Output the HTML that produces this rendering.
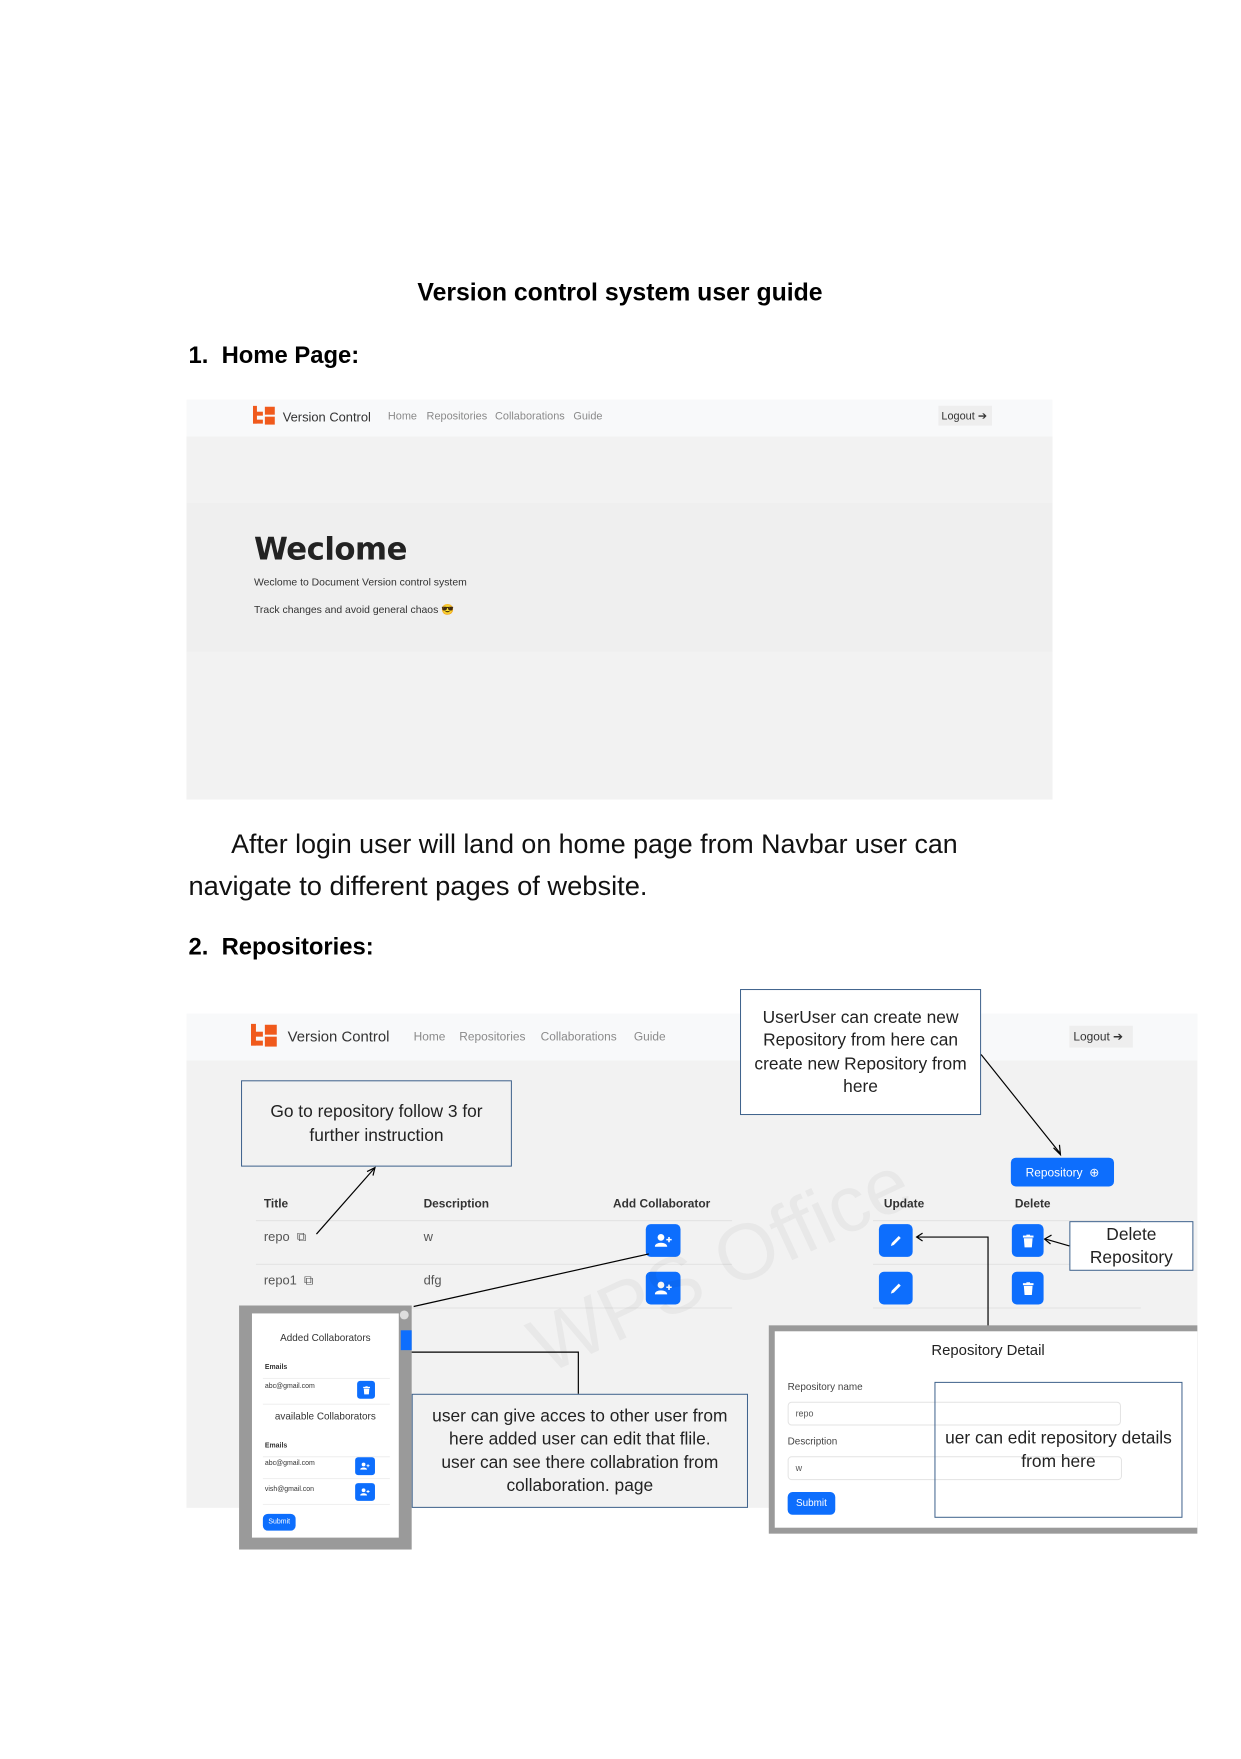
<!DOCTYPE html>
<html><head><meta charset="utf-8"><style>
*{margin:0;padding:0;box-sizing:border-box}
body{width:1241px;height:1754px;background:#fff;position:relative;overflow:hidden;font-family:"Liberation Sans",sans-serif;color:#000}
#w{position:absolute;left:0;top:3px;width:1260px;height:1770px;transform:scale(0.992);transform-origin:0 0}
.a{position:absolute;white-space:nowrap}
.h{font-weight:bold;font-size:24px}
.nav{color:#8a8a8a;font-size:11px}
.btn{position:absolute;background:#0d6efd;border-radius:5px;display:flex;align-items:center;justify-content:center}
.box{position:absolute;border:1px solid #3b5f8a;background:#f2f2f2;text-align:center;font-size:17.5px;color:#222;line-height:23.5px;display:flex;align-items:center;justify-content:center;flex-direction:column}
.m{position:absolute;font-size:7px;color:#333;white-space:nowrap}
</style></head><body><div id="w">
<svg width="0" height="0" style="position:absolute"><defs>
<symbol id="pu" viewBox="0 0 20 16"><circle cx="7" cy="4.5" r="3.8" fill="#fff"/><path d="M0 15 C0 9 14 9 14 15 Z" fill="#fff"/><path d="M16 4v6M13 7h6" stroke="#fff" stroke-width="1.8"/></symbol>
<symbol id="tr" viewBox="0 0 12 14"><rect x="0" y="1" width="12" height="2.2" fill="#fff"/><rect x="4" y="0" width="4" height="2" fill="#fff"/><path d="M1.2 4h9.6l-0.8 10h-8z" fill="#fff"/></symbol>
<symbol id="pe" viewBox="0 0 14 14"><path d="M2 12 L3 9 L10 2 L12 4 L5 11 Z" fill="#fff"/></symbol>
</defs></svg>
<div class="a h" style="left:0;width:1250px;text-align:center;top:278px;font-size:25px">Version control system user guide</div>
<div class="a h" style="left:190px;top:342px">1.&nbsp; Home Page:</div>

<div class="a" style="left:188px;top:400px;width:873px;height:403px;background:#f2f2f2"></div>
<div class="a" style="left:188px;top:400px;width:873px;height:37px;background:#f8f9fa"></div>
<div class="a" style="left:188px;top:504px;width:873px;height:150px;background:#efefef"></div>
<svg class="a" style="left:255px;top:406px" width="24" height="20"><rect x="0" y="0" width="4" height="18" fill="#f05a1c"/><rect x="0" y="14" width="10" height="4" fill="#f05a1c"/><rect x="0" y="6" width="10" height="4" fill="#f05a1c"/><rect x="12" y="1" width="10" height="8" fill="#f05a1c"/><rect x="12" y="11" width="10" height="8" fill="#f05a1c"/></svg>
<div class="a" style="left:285px;top:410px;font-size:13px;color:#333">Version Control</div>
<div class="a nav" style="left:391px;top:411px">Home</div>
<div class="a nav" style="left:430px;top:411px">Repositories</div>
<div class="a nav" style="left:499px;top:411px">Collaborations</div>
<div class="a nav" style="left:578px;top:411px">Guide</div>
<div class="a" style="left:946px;top:406px;width:54px;height:20px;background:#eee;font-size:11px;color:#333;padding:4px 3px">Logout ➔</div>
<div class="a" style="left:256px;top:533px;font-size:31px;font-weight:bold;color:#222;font-family:'DejaVu Sans',sans-serif;letter-spacing:-0.5px">Weclome</div>
<div class="a" style="left:256px;top:578px;font-size:10.5px;color:#333">Weclome to Document Version control system</div>
<div class="a" style="left:256px;top:605px;font-size:10.5px;color:#333">Track changes and avoid general chaos 😎</div>

<div class="a" style="left:233px;top:833px;font-size:27px;color:#111">After login user will land on home page from Navbar user can</div>
<div class="a" style="left:190px;top:874px;font-size:27.5px;color:#111">navigate to different pages of website.</div>
<div class="a h" style="left:190px;top:938px">2.&nbsp; Repositories:</div>

<div class="a" style="left:188px;top:1019px;width:1019px;height:498px;background:#f2f2f2"></div>
<div class="a" style="left:188px;top:1019px;width:1019px;height:47px;background:#f8f9fa"></div>
<svg class="a" style="left:253px;top:1029px" width="28" height="24"><rect x="0" y="0" width="5" height="22" fill="#f05a1c"/><rect x="0" y="17" width="12" height="5" fill="#f05a1c"/><rect x="0" y="8" width="12" height="5" fill="#f05a1c"/><rect x="14" y="1" width="12" height="10" fill="#f05a1c"/><rect x="14" y="13" width="12" height="10" fill="#f05a1c"/></svg>
<div class="a" style="left:290px;top:1034px;font-size:15px;color:#333">Version Control</div>
<div class="a nav" style="left:417px;top:1035px;font-size:12px">Home</div>
<div class="a nav" style="left:463px;top:1035px;font-size:12px">Repositories</div>
<div class="a nav" style="left:545px;top:1035px;font-size:12px">Collaborations</div>
<div class="a nav" style="left:639px;top:1035px;font-size:12px">Guide</div>
<div class="a" style="left:1078px;top:1031px;width:64px;height:22px;background:#eee;font-size:12px;color:#333;padding:4px 4px">Logout ➔</div>

<div class="btn" style="left:1019px;top:1164px;width:104px;height:29px;color:#fff;font-size:12px">Repository &nbsp;⊕</div>
<div class="a" style="left:266px;top:1203px;font-size:12px;font-weight:bold;color:#333">Title</div>
<div class="a" style="left:427px;top:1203px;font-size:12px;font-weight:bold;color:#333">Description</div>
<div class="a" style="left:618px;top:1203px;font-size:12px;font-weight:bold;color:#333">Add Collaborator</div>
<div class="a" style="left:891px;top:1203px;font-size:12px;font-weight:bold;color:#333">Update</div>
<div class="a" style="left:1023px;top:1203px;font-size:12px;font-weight:bold;color:#333">Delete</div>
<div class="a" style="left:258px;top:1227px;width:480px;height:1px;background:#e2e2e2"></div>
<div class="a" style="left:258px;top:1271px;width:480px;height:1px;background:#e2e2e2"></div>
<div class="a" style="left:258px;top:1315px;width:480px;height:1px;background:#e2e2e2"></div>
<div class="a" style="left:880px;top:1227px;width:270px;height:1px;background:#e2e2e2"></div>
<div class="a" style="left:880px;top:1271px;width:270px;height:1px;background:#e2e2e2"></div>
<div class="a" style="left:880px;top:1315px;width:270px;height:1px;background:#e2e2e2"></div>
<div class="a" style="left:266px;top:1236px;font-size:13px;color:#555">repo &nbsp;⧉</div>
<div class="a" style="left:266px;top:1280px;font-size:13px;color:#555">repo1 &nbsp;⧉</div>
<div class="a" style="left:427px;top:1236px;font-size:13px;color:#555">w</div>
<div class="a" style="left:427px;top:1280px;font-size:13px;color:#555">dfg</div>
<div class="btn" style="left:651px;top:1231px;width:35px;height:33px"><svg width="18" height="15"><use href="#pu"/></svg></div>
<div class="btn" style="left:651px;top:1279px;width:35px;height:33px"><svg width="18" height="15"><use href="#pu"/></svg></div>
<div class="btn" style="left:886px;top:1231px;width:34px;height:33px"><svg width="14" height="14"><use href="#pe"/></svg></div>
<div class="btn" style="left:886px;top:1279px;width:34px;height:33px"><svg width="14" height="14"><use href="#pe"/></svg></div>
<div class="btn" style="left:1020px;top:1231px;width:32px;height:33px"><svg width="11" height="14"><use href="#tr"/></svg></div>
<div class="btn" style="left:1020px;top:1279px;width:32px;height:33px"><svg width="11" height="14"><use href="#tr"/></svg></div>

<div class="box" style="left:243px;top:1086px;width:273px;height:87px"><div>Go to repository follow 3 for</div><div>further instruction</div></div>
<div class="box" style="left:746px;top:994px;width:243px;height:127px;background:#fff"><div>UserUser can create new</div><div>Repository from here can</div><div>create new Repository from</div><div>here</div></div>
<div class="box" style="left:1078px;top:1228px;width:125px;height:50px;background:#fff"><div>Delete</div><div>Repository</div></div>

<div class="a" style="left:241px;top:1313px;width:174px;height:246px;background:#9a9a9a"></div>
<div class="a" style="left:254px;top:1321px;width:148px;height:226px;background:#fff"></div>
<div class="m" style="left:254px;width:148px;text-align:center;top:1341px;font-size:10px">Added Collaborators</div>
<div class="m" style="left:267px;top:1372px;font-weight:bold">Emails</div>
<div class="m" style="left:267px;top:1391px">abc@gmail.com</div>
<div class="m" style="left:254px;width:148px;text-align:center;top:1420px;font-size:10px">available Collaborators</div>
<div class="m" style="left:267px;top:1451px;font-weight:bold">Emails</div>
<div class="m" style="left:267px;top:1469px">abc@gmail.com</div>
<div class="m" style="left:267px;top:1495px">vish@gmail.con</div>
<div class="a" style="left:265px;top:1386px;width:128px;height:1px;background:#eee"></div>
<div class="a" style="left:265px;top:1412px;width:128px;height:1px;background:#eee"></div>
<div class="a" style="left:265px;top:1465px;width:128px;height:1px;background:#eee"></div>
<div class="a" style="left:265px;top:1487px;width:128px;height:1px;background:#eee"></div>
<div class="a" style="left:265px;top:1513px;width:128px;height:1px;background:#eee"></div>
<div class="btn" style="left:360px;top:1389px;width:18px;height:18px;border-radius:3px"><svg width="7" height="9"><use href="#tr"/></svg></div>
<div class="btn" style="left:358px;top:1466px;width:20px;height:18px;border-radius:3px"><svg width="10" height="8"><use href="#pu"/></svg></div>
<div class="btn" style="left:358px;top:1492px;width:20px;height:18px;border-radius:3px"><svg width="10" height="8"><use href="#pu"/></svg></div>
<div class="btn" style="left:265px;top:1523px;width:33px;height:17px;color:#fff;font-size:7px">Submit</div>
<div class="a" style="left:403px;top:1318px;width:9px;height:9px;border-radius:50%;background:#ddd"></div>
<div class="a" style="left:404px;top:1338px;width:11px;height:20px;background:#0d6efd"></div>

<div class="box" style="left:415px;top:1402px;width:339px;height:115px"><div>user can give acces to other user from</div><div>here added user can edit that flile.</div><div>user can see there collabration from</div><div>collaboration. page</div></div>

<div class="a" style="left:775px;top:1333px;width:432px;height:210px;background:#9a9a9a"></div>
<div class="a" style="left:781px;top:1339px;width:426px;height:198px;background:#fff"></div>
<div class="a" style="left:781px;top:1350px;width:430px;text-align:center;font-size:15px;color:#222">Repository Detail</div>
<div class="a" style="left:794px;top:1390px;font-size:10px;color:#444">Repository name</div>
<div class="a" style="left:794px;top:1410px;width:336px;height:24px;border:1px solid #e3e3e3;border-radius:4px;font-size:9px;color:#555;padding:6px 7px">repo</div>
<div class="a" style="left:794px;top:1445px;font-size:10px;color:#444">Description</div>
<div class="a" style="left:794px;top:1465px;width:337px;height:24px;border:1px solid #e3e3e3;border-radius:4px;font-size:9px;color:#555;padding:6px 7px">w</div>
<div class="btn" style="left:794px;top:1501px;width:48px;height:23px;color:#fff;font-size:10px">Submit</div>
<div class="box" style="left:942px;top:1390px;width:250px;height:137px;background:transparent"><div>uer can edit repository details</div><div>from here</div></div>

<svg class="a" style="left:0;top:0" width="1260" height="1770">
<g stroke="#000" stroke-width="1.2" fill="none">
<line x1="989" y1="1060" x2="1069" y2="1160"/>
<polyline points="1062,1154 1069,1161 1068,1151"/>
<line x1="319" y1="1241" x2="378" y2="1174"/>
<polyline points="370,1178 378,1174 376,1182"/>
<line x1="417" y1="1314" x2="654" y2="1261"/>
<polyline points="415,1360 583,1360 583,1402"/>
<polyline points="924,1244 996,1244 996,1333"/>
<polyline points="930,1240 924,1244 930,1248"/>
<line x1="1078" y1="1253" x2="1054" y2="1246"/>
<polyline points="1060,1242 1053,1246 1059,1251"/>
</g>
<text x="490" y="1330" font-family="Liberation Sans" font-size="80" fill="#000" fill-opacity="0.04" transform="rotate(-25 640 1220)">WPS Office</text>
</svg>
</div></body></html>
